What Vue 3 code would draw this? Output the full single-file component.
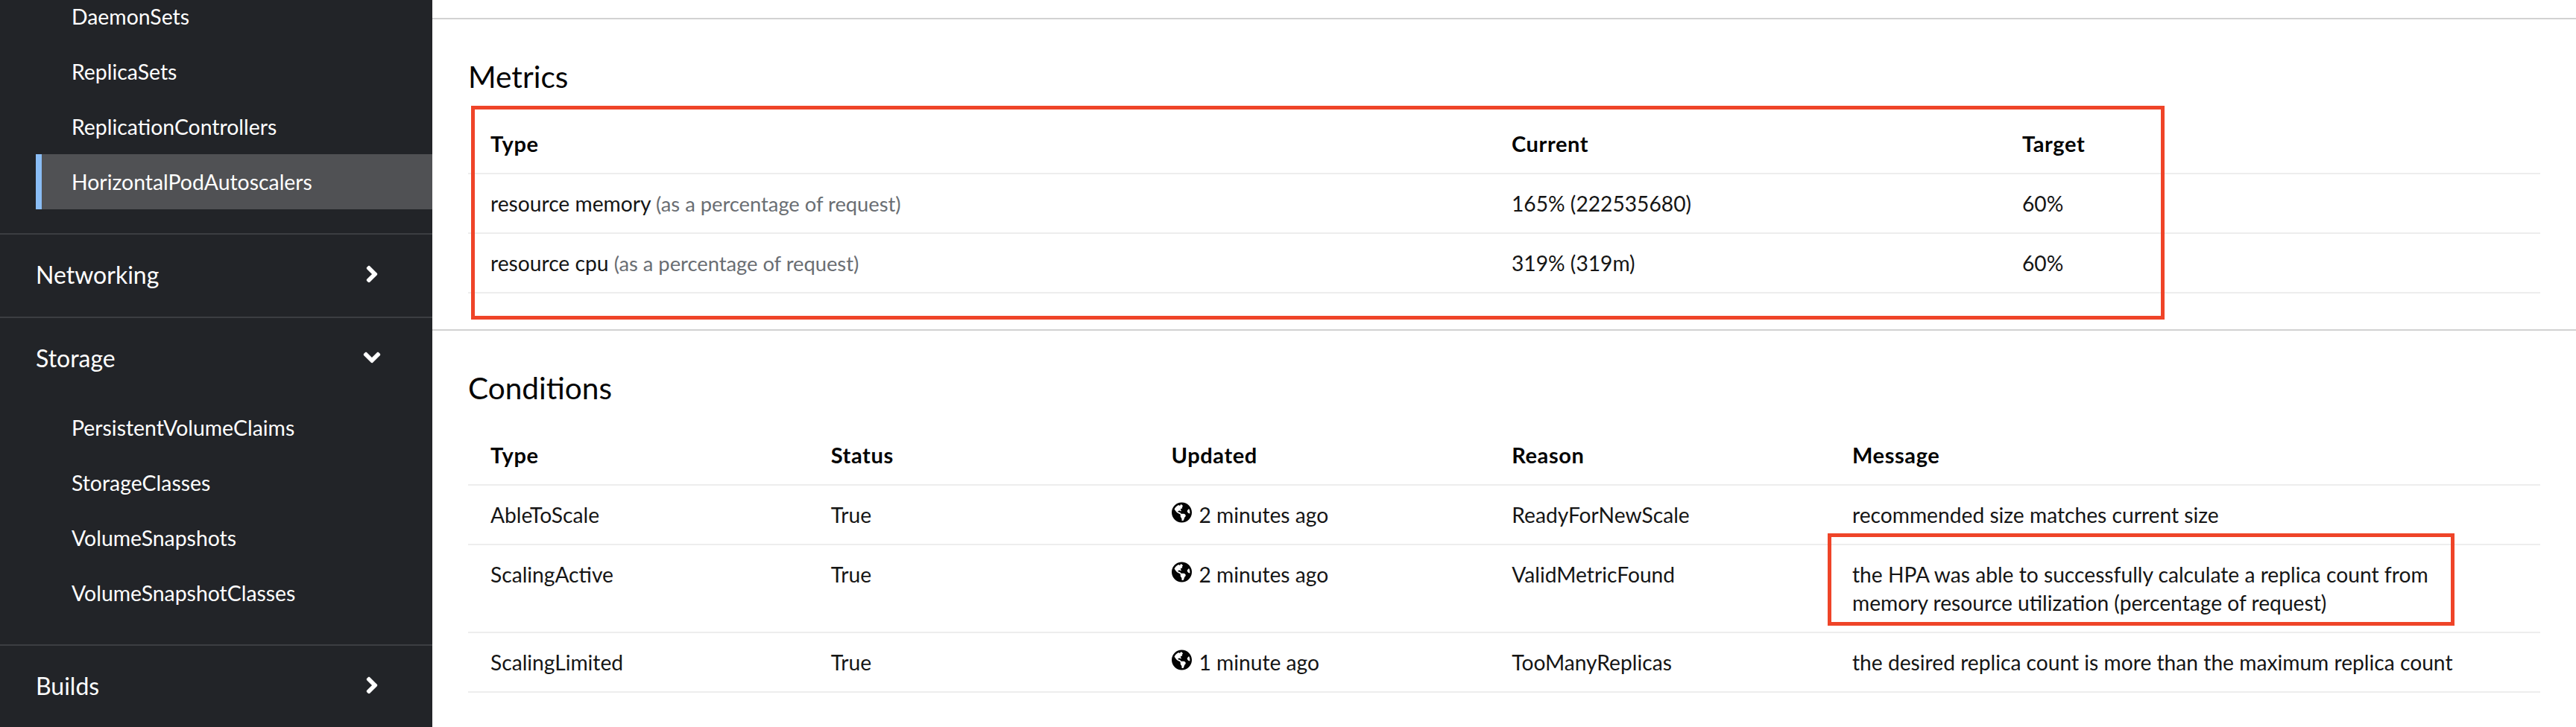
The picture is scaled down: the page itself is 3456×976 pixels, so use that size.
<script setup>
const globe = 'M248 8C111.03 8 0 119.03 0 256s111.03 248 248 248 248-111.03 248-248S384.97 8 248 8zm82.29 357.6c-3.9 3.88-7.99 7.95-11.31 11.28-2.99 3-5.1 6.7-6.17 10.71-1.51 5.66-2.73 11.38-4.77 16.87l-17.39 46.85c-13.76 3-28 4.69-42.65 4.69v-27.38c1.69-12.62-7.64-36.26-22.63-51.25-6-6-9.37-14.14-9.37-22.63v-32.01c0-11.64-6.27-22.34-16.46-27.97-14.37-7.95-34.81-19.06-48.81-26.11-11.48-5.78-22.1-13.14-31.65-21.75l-.8-.72a114.792 114.792 0 0 1-18.06-20.74c-9.38-13.77-24.66-36.42-34.59-51.14 20.47-45.5 57.36-82.04 103.2-101.89l24.01 12.01C203.48 89.74 216 82.01 216 70.11v-11.3c7.99-1.29 16.12-2.11 24.39-2.42l28.3 28.3c6.25 6.25 6.25 16.38 0 22.63L264 112l-10.34 10.34c-3.12 3.12-3.12 8.19 0 11.31l4.69 4.69c3.12 3.12 3.12 8.19 0 11.31l-8 8a8.008 8.008 0 0 1-5.66 2.34h-8.99c-2.08 0-4.08.81-5.58 2.27l-9.92 9.65a8.008 8.008 0 0 0-1.58 9.31l15.59 31.19c2.66 5.32-1.21 11.58-7.15 11.58h-5.64c-1.93 0-3.79-.7-5.24-1.96l-9.28-8.06a16.017 16.017 0 0 0-15.55-3.1l-31.17 10.39a11.95 11.95 0 0 0-8.17 11.34c0 4.53 2.56 8.66 6.61 10.69l11.08 5.54c9.41 4.71 19.79 7.16 30.31 7.16s22.59 27.29 32 32h66.75c8.49 0 16.62 3.37 22.63 9.37l13.69 13.69a30.503 30.503 0 0 1 8.93 21.57 46.536 46.536 0 0 1-13.72 32.98zM417 274.25c-5.79-1.45-10.84-5-14.15-9.97l-17.98-26.97a23.97 23.97 0 0 1 0-26.62l19.59-29.38c2.32-3.47 5.5-6.29 9.24-8.15l12.98-6.49C440.2 193.59 448 223.87 448 256c0 8.67-.74 17.16-1.82 25.54L417 274.25z'
const angle = 'M224.3 273l-136 136c-9.4 9.4-24.6 9.4-33.9 0l-22.6-22.6c-9.4-9.4-9.4-24.6 0-33.9l96.4-96.4-96.4-96.4c-9.4-9.4-9.4-24.6 0-33.9L54.3 103c9.4-9.4 24.6-9.4 33.9 0l136 136c9.5 9.4 9.5 24.6.1 34z'

const workloads = ['DaemonSets', 'ReplicaSets', 'ReplicationControllers', 'HorizontalPodAutoscalers']
const storage = ['PersistentVolumeClaims', 'StorageClasses', 'VolumeSnapshots', 'VolumeSnapshotClasses']

const metrics = [
  { type: 'resource memory', current: '165% (222535680)', target: '60%' },
  { type: 'resource cpu', current: '319% (319m)', target: '60%' }
]

const conditions = [
  { type: 'AbleToScale', status: 'True', updated: '2 minutes ago', reason: 'ReadyForNewScale', message: 'recommended size matches current size' },
  { type: 'ScalingActive', status: 'True', updated: '2 minutes ago', reason: 'ValidMetricFound', message: 'the HPA was able to successfully calculate a replica count from memory resource utilization (percentage of request)' },
  { type: 'ScalingLimited', status: 'True', updated: '1 minute ago', reason: 'TooManyReplicas', message: 'the desired replica count is more than the maximum replica count' }
]
</script>

<template>
  <div class="page">
    <aside class="sidebar">
      <ul class="sub-list first">
        <li v-for="item in workloads" :key="item" :class="{ active: item === 'HorizontalPodAutoscalers' }">{{ item }}</li>
      </ul>
      <div class="nav-group">
        <div class="nav-head">
          <span>Networking</span>
          <svg class="angle" viewBox="0 0 256 512"><path :d="angle" /></svg>
        </div>
      </div>
      <div class="nav-group">
        <div class="nav-head">
          <span>Storage</span>
          <svg class="angle down" viewBox="0 0 256 512"><path :d="angle" /></svg>
        </div>
        <ul class="sub-list">
          <li v-for="item in storage" :key="item">{{ item }}</li>
        </ul>
      </div>
      <div class="nav-group">
        <div class="nav-head">
          <span>Builds</span>
          <svg class="angle" viewBox="0 0 256 512"><path :d="angle" /></svg>
        </div>
      </div>
    </aside>

    <main class="content">
      <section class="section">
        <h2>Metrics</h2>
        <table class="metrics">
          <thead>
            <tr><th>Type</th><th>Current</th><th>Target</th></tr>
          </thead>
          <tbody>
            <tr v-for="m in metrics" :key="m.type">
              <td>{{ m.type }} <span class="muted">(as a percentage of request)</span></td>
              <td>{{ m.current }}</td>
              <td>{{ m.target }}</td>
            </tr>
          </tbody>
        </table>
        <div class="mark mark-metrics"></div>
      </section>

      <section class="section">
        <h2>Conditions</h2>
        <table class="conditions">
          <thead>
            <tr><th>Type</th><th>Status</th><th>Updated</th><th>Reason</th><th>Message</th></tr>
          </thead>
          <tbody>
            <tr v-for="c in conditions" :key="c.type">
              <td>{{ c.type }}</td>
              <td>{{ c.status }}</td>
              <td>
                <svg class="globe" viewBox="0 0 496 512"><path :d="globe" /></svg>{{ c.updated }}
              </td>
              <td>{{ c.reason }}</td>
              <td class="message">{{ c.message }}</td>
            </tr>
          </tbody>
        </table>
        <div class="mark mark-message"></div>
      </section>
    </main>
  </div>
</template>

<style>
html, body {
  margin: 0;
  background: #fff;
}
</style>

<style scoped>
.page {
  display: flex;
  width: 3456px;
  height: 976px;
  overflow: hidden;
  font-family: Lato, "Open Sans", sans-serif;
  color: #151515;
}

.sidebar {
  width: 580px;
  flex: none;
  background: #222428;
  color: #fff;
  font-size: 28.4px;
}

.sub-list {
  list-style: none;
  margin: 0;
  padding: 0 0 32px 48px;
}

.sub-list.first {
  margin-top: -15px;
}

.sub-list li {
  height: 74px;
  line-height: 74px;
  padding-left: 48px;
}

.sub-list li.active {
  background: #505154;
  border-left: 8px solid #8abdf5;
  padding-left: 40px;
}

.nav-group {
  border-top: 2px solid #3c3e42;
}

.nav-head {
  display: flex;
  align-items: center;
  justify-content: space-between;
  height: 106px;
  padding: 0 72px 4px 48px;
  font-size: 32px;
}

.angle {
  width: 18px;
  height: 36px;
  fill: #fff;
}

.angle.down {
  transform: rotate(90deg);
}

.content {
  flex: 1;
  min-width: 0;
  padding-left: 48px;
}

.section {
  position: relative;
  margin-left: -48px;
  padding: 0 48px 48px;
  border-top: 2px solid #d2d2d2;
}

.section:first-child {
  margin-top: 24px;
}

h2 {
  margin: 54px 0 28px;
  font-size: 40.6px;
  font-weight: 400;
  line-height: 46px;
  color: #030303;
}

table {
  width: 2780px;
  border-collapse: separate;
  border-spacing: 0;
  table-layout: fixed;
  font-size: 28.2px;
  line-height: 38px;
}

th, td {
  height: 38px;
  padding: 20px 30px;
  text-align: left;
  vertical-align: top;
  border-bottom: 2px solid #ededed;
}

th {
  font-size: 29px;
  font-weight: 700;
  letter-spacing: 0.6px;
  color: #030303;
}

.metrics th:nth-child(1) { width: 1310px; }
.metrics th:nth-child(2) { width: 625px; }

.conditions th:nth-child(-n+4) { width: 396.75px; }

.message {
  padding-right: 85px;
}

.muted {
  color: #6a6e73;
  font-size: 27.3px;
  line-height: 1;
}

.globe {
  width: 27px;
  height: 28px;
  margin-right: 10px;
  vertical-align: 0;
  fill: #030303;
}

.mark {
  position: absolute;
  box-sizing: border-box;
  border: 5px solid #ef4428;
}

.mark-metrics {
  left: 52px;
  top: 116px;
  width: 2272px;
  height: 287px;
}

.mark-message {
  left: 1872px;
  top: 272px;
  width: 841px;
  height: 124px;
}
</style>
